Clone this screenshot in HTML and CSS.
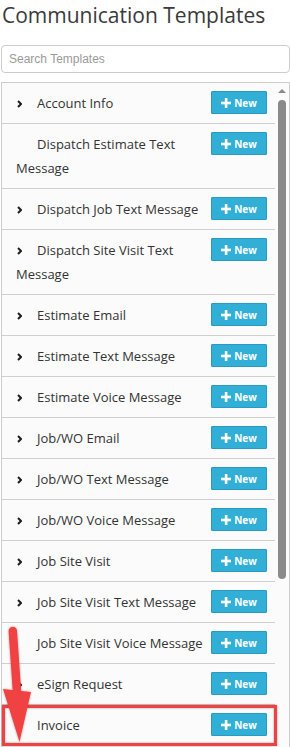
FILE: index.html
```html
<!DOCTYPE html>
<html>
<head>
<meta charset="utf-8">
<link rel="stylesheet" href="styles.css">
</head>
<body>
<div class="page">
  <h1 class="title">Communication Templates</h1>
  <input class="search" type="text" placeholder="Search Templates">
  <div class="list">
    <div class="rows">
      <div class="row"><button class="btn-new"><svg class="plus" viewBox="0 0 10 10"><rect x="3.8" y="0" width="2.6" height="10"/><rect x="0" y="3.7" width="10" height="2.6"/></svg>New</button><span class="chev"><svg viewBox="0 0 5 8"><polyline points="1,1 4,4 1,7"/></svg></span>Account Info</div>
      <div class="row"><button class="btn-new"><svg class="plus" viewBox="0 0 10 10"><rect x="3.8" y="0" width="2.6" height="10"/><rect x="0" y="3.7" width="10" height="2.6"/></svg>New</button><span class="chev"></span>Dispatch Estimate Text Message</div>
      <div class="row"><button class="btn-new"><svg class="plus" viewBox="0 0 10 10"><rect x="3.8" y="0" width="2.6" height="10"/><rect x="0" y="3.7" width="10" height="2.6"/></svg>New</button><span class="chev"><svg viewBox="0 0 5 8"><polyline points="1,1 4,4 1,7"/></svg></span>Dispatch Job Text Message</div>
      <div class="row"><button class="btn-new"><svg class="plus" viewBox="0 0 10 10"><rect x="3.8" y="0" width="2.6" height="10"/><rect x="0" y="3.7" width="10" height="2.6"/></svg>New</button><span class="chev"><svg viewBox="0 0 5 8"><polyline points="1,1 4,4 1,7"/></svg></span>Dispatch Site Visit Text Message</div>
      <div class="row"><button class="btn-new"><svg class="plus" viewBox="0 0 10 10"><rect x="3.8" y="0" width="2.6" height="10"/><rect x="0" y="3.7" width="10" height="2.6"/></svg>New</button><span class="chev"><svg viewBox="0 0 5 8"><polyline points="1,1 4,4 1,7"/></svg></span>Estimate Email</div>
      <div class="row"><button class="btn-new"><svg class="plus" viewBox="0 0 10 10"><rect x="3.8" y="0" width="2.6" height="10"/><rect x="0" y="3.7" width="10" height="2.6"/></svg>New</button><span class="chev"><svg viewBox="0 0 5 8"><polyline points="1,1 4,4 1,7"/></svg></span>Estimate Text Message</div>
      <div class="row"><button class="btn-new"><svg class="plus" viewBox="0 0 10 10"><rect x="3.8" y="0" width="2.6" height="10"/><rect x="0" y="3.7" width="10" height="2.6"/></svg>New</button><span class="chev"><svg viewBox="0 0 5 8"><polyline points="1,1 4,4 1,7"/></svg></span>Estimate Voice Message</div>
      <div class="row"><button class="btn-new"><svg class="plus" viewBox="0 0 10 10"><rect x="3.8" y="0" width="2.6" height="10"/><rect x="0" y="3.7" width="10" height="2.6"/></svg>New</button><span class="chev"><svg viewBox="0 0 5 8"><polyline points="1,1 4,4 1,7"/></svg></span>Job/WO Email</div>
      <div class="row"><button class="btn-new"><svg class="plus" viewBox="0 0 10 10"><rect x="3.8" y="0" width="2.6" height="10"/><rect x="0" y="3.7" width="10" height="2.6"/></svg>New</button><span class="chev"><svg viewBox="0 0 5 8"><polyline points="1,1 4,4 1,7"/></svg></span>Job/WO Text Message</div>
      <div class="row"><button class="btn-new"><svg class="plus" viewBox="0 0 10 10"><rect x="3.8" y="0" width="2.6" height="10"/><rect x="0" y="3.7" width="10" height="2.6"/></svg>New</button><span class="chev"><svg viewBox="0 0 5 8"><polyline points="1,1 4,4 1,7"/></svg></span>Job/WO Voice Message</div>
      <div class="row"><button class="btn-new"><svg class="plus" viewBox="0 0 10 10"><rect x="3.8" y="0" width="2.6" height="10"/><rect x="0" y="3.7" width="10" height="2.6"/></svg>New</button><span class="chev"><svg viewBox="0 0 5 8"><polyline points="1,1 4,4 1,7"/></svg></span>Job Site Visit</div>
      <div class="row"><button class="btn-new"><svg class="plus" viewBox="0 0 10 10"><rect x="3.8" y="0" width="2.6" height="10"/><rect x="0" y="3.7" width="10" height="2.6"/></svg>New</button><span class="chev"><svg viewBox="0 0 5 8"><polyline points="1,1 4,4 1,7"/></svg></span>Job Site Visit Text Message</div>
      <div class="row"><button class="btn-new"><svg class="plus" viewBox="0 0 10 10"><rect x="3.8" y="0" width="2.6" height="10"/><rect x="0" y="3.7" width="10" height="2.6"/></svg>New</button><span class="chev"></span>Job Site Visit Voice Message</div>
      <div class="row"><button class="btn-new"><svg class="plus" viewBox="0 0 10 10"><rect x="3.8" y="0" width="2.6" height="10"/><rect x="0" y="3.7" width="10" height="2.6"/></svg>New</button><span class="chev"><svg viewBox="0 0 5 8"><polyline points="1,1 4,4 1,7"/></svg></span>eSign Request</div>
      <div class="row"><button class="btn-new"><svg class="plus" viewBox="0 0 10 10"><rect x="3.8" y="0" width="2.6" height="10"/><rect x="0" y="3.7" width="10" height="2.6"/></svg>New</button><span class="chev"><svg viewBox="0 0 5 8"><polyline points="1,1 4,4 1,7"/></svg></span>Invoice</div>
    </div>
    <div class="scrollbar">
      <span class="up"></span>
      <span class="thumb"></span>
    </div>
  </div>
  <svg class="annot" viewBox="0 0 290 747" width="290" height="747">
    <defs>
      <filter id="sh" x="-20%" y="-20%" width="140%" height="140%">
        <feDropShadow dx="0" dy="0" stdDeviation="1.2" flood-color="#000" flood-opacity="0.35"/>
      </filter>
    </defs>
    <rect x="3.5" y="706.5" width="272" height="38" fill="none" stroke="#f04343" stroke-width="3" filter="url(#sh)"/>
    <g filter="url(#sh)" fill="#f04343">
      <line x1="12.8" y1="631" x2="17" y2="692" stroke="#f04343" stroke-width="8.5" stroke-linecap="round"/>
      <polygon points="3,689 31,692 19.5,742"/>
    </g>
  </svg>
</div>
</body>
</html>
```
FILE: styles.css
```css
* { box-sizing: border-box; }
html, body {
  margin: 0;
  padding: 0;
  background: #ffffff;
  overflow: hidden;
}
.page {
  position: relative;
  width: 290px;
  height: 747px;
  overflow: hidden;
  font-family: "Open Sans", "Liberation Sans", sans-serif;
}
.title {
  margin: 0 0 15px 2px;
  font-size: 21px;
  line-height: 30px;
  font-weight: 400;
  color: #3a3a3a;
  white-space: nowrap;
}
.search {
  display: block;
  margin: 0 0 9px 1px;
  width: 289px;
  height: 28px;
  border: 1px solid #cccccc;
  border-radius: 4px;
  padding: 0 7px;
  font-family: "Liberation Sans", Arial, sans-serif;
  font-size: 12px;
  color: #555;
  background: #fff;
  outline: none;
}
.search::placeholder { color: #9a9a9a; }
.list {
  display: flex;
  margin-left: 1px;
  width: 289px;
  height: 700px;
  border: 1px solid #cccccc;
  background: #fbfbfb;
  overflow: hidden;
}
.rows {
  width: 273px;
  flex: none;
}
.row {
  padding: 8px 8px 8px 14px;
  line-height: 24px;
  font-size: 13px;
  color: #333333;
  border-bottom: 1px solid #cfcfcf;
}
.chev {
  display: inline-block;
  width: 5px;
  height: 8px;
  margin: 0 15px 0 1px;
}
.chev svg {
  display: block;
  width: 5px;
  height: 8px;
  fill: none;
  stroke: #1e1e1e;
  stroke-width: 2;
}
.btn-new {
  float: right;
  display: flex;
  align-items: center;
  justify-content: center;
  gap: 3px;
  width: 56px;
  height: 23px;
  padding: 0;
  margin: 0;
  background: #31afd6;
  border: 1px solid #2a9bc0;
  border-radius: 1px;
  color: #ffffff;
  font-family: "Open Sans", "Liberation Sans", sans-serif;
  font-weight: 700;
  font-size: 10px;
  line-height: 1;
}
.plus {
  width: 10px;
  height: 10px;
  fill: #ffffff;
}
.scrollbar {
  flex: 1;
  display: flex;
  flex-direction: column;
  align-items: center;
  background: #fbfbfb;
  padding-top: 6px;
}
.up {
  width: 0;
  height: 0;
  border-left: 4px solid transparent;
  border-right: 4px solid transparent;
  border-bottom: 4px solid #8a8a8a;
  margin-left: -1px;
}
.thumb {
  margin-top: 7px;
  margin-left: -1px;
  width: 8px;
  height: 479px;
  border-radius: 4px;
  background: #8a8a8a;
}
.annot {
  position: absolute;
  left: 0;
  top: 0;
  pointer-events: none;
}
```
